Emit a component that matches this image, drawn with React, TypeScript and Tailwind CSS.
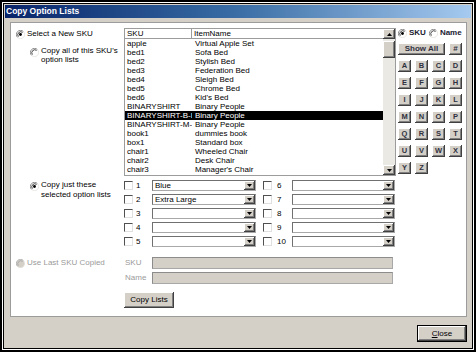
import React from 'react';

const RAISED =
  'bg-[#d4d0c8] shadow-[inset_-1px_-1px_0_#404040,inset_1px_1px_0_#ffffff,inset_-2px_-2px_0_#808080]';

const ITEMS: [string, string][] = [
  ['apple', 'Virtual Apple Set'],
  ['bed1', 'Sofa Bed'],
  ['bed2', 'Stylish Bed'],
  ['bed3', 'Federation Bed'],
  ['bed4', 'Sleigh Bed'],
  ['bed5', 'Chrome Bed'],
  ['bed6', "Kid's Bed"],
  ['BINARYSHIRT', 'Binary People'],
  ['BINARYSHIRT-B-L', 'Binary People'],
  ['BINARYSHIRT-M-L', 'Binary People'],
  ['book1', 'dummies book'],
  ['box1', 'Standard box'],
  ['chair1', 'Wheeled Chair'],
  ['chair2', 'Desk Chair'],
  ['chair3', "Manager's Chair"],
];

const LETTERS = 'ABCDEFGHIJKLMNOPQRSTUVWXYZ'.split('');

function Radio({ checked, disabled }: { checked?: boolean; disabled?: boolean }) {
  return (
    <svg width="9" height="9" viewBox="0 0 12 12" className="shrink-0">
      <circle cx="6" cy="6" r="5.5" fill={disabled ? '#d4d0c8' : '#ffffff'} />
      <path d="M2.1 9.9 A5.5 5.5 0 0 1 9.9 2.1" fill="none" stroke={disabled ? '#b0b0b0' : '#808080'} strokeWidth="1.2" />
      <path d="M3.2 8.8 A4 4 0 0 1 8.8 3.2" fill="none" stroke={disabled ? '#a8a8a8' : '#303030'} strokeWidth="1.2" />
      <path d="M9.9 2.1 A5.5 5.5 0 0 1 2.1 9.9" fill="none" stroke="#e4e2dc" strokeWidth="1" />
      {checked && <circle cx="6" cy="6" r="1.9" fill={disabled ? '#909090' : '#000000'} />}
    </svg>
  );
}

function Checkbox() {
  return (
    <span className="w-[9px] h-[9px] shrink-0 bg-white border border-t-[#505050] border-l-[#505050] border-r-[#e0e0e0] border-b-[#e0e0e0]" />
  );
}

function DownTri() {
  return (
    <svg width="5" height="3" viewBox="0 0 5 3">
      <path d="M0 0H5L2.5 3Z" fill="#000" />
    </svg>
  );
}

function Combo({ value, width }: { value?: string; width: string }) {
  return (
    <div className={`${width} h-[11px] flex bg-white border border-[#a8a8a8] border-t-[#707070] border-l-[#707070]`}>
      <span className="flex-1 pl-[2px] leading-[9px] text-[8px] text-black truncate">{value}</span>
      <span className={`w-[11px] h-full flex items-center justify-center ${RAISED}`}>
        <DownTri />
      </span>
    </div>
  );
}

export default function App() {
  return (
    <div className="w-[476px] h-[352px] border-2 border-black bg-white p-px font-['Liberation_Sans',Arial,sans-serif] text-[8px] text-black">
      <div className="h-full border border-black bg-[#d4d0c8] flex flex-col">
        {/* Title bar */}
        <div className="mx-px mt-px h-[13px] bg-linear-to-r from-[#0a246a] via-[#3a6ea5] to-[#a6caf0] flex items-center pl-[1px]">
          <span className="text-white font-bold text-[8.5px] leading-none">Copy Option Lists</span>
        </div>

        {/* Main panel */}
        <div className="ml-[6px] mr-[5px] mt-[4px] h-[295px] bg-white border border-[#9c9c9c] flex flex-col">
          {/* SKU list section */}
          <div className="flex mt-[5px]">
            <div className="w-[113px]">
              <div className="flex items-center pl-[5px] mt-[1px] h-[10px]">
                <Radio checked />
                <span className="ml-[2px]">Select a New SKU</span>
              </div>
              <div className="flex items-start pl-[19px] mt-[7px]">
                <span className="mt-[2px]">
                  <Radio />
                </span>
                <span className="ml-[2px] leading-[9px]">
                  Copy all of this SKU's
                  <br />
                  option lists
                </span>
              </div>
            </div>

            <div className="w-[272px] h-[148px] border border-[#9c9c9c] flex">
              <div className="flex-1 flex flex-col overflow-hidden">
                <div className="flex h-[10px] border-b border-[#9c9c9c] leading-[9px]">
                  <span className="w-[67px] pl-[2px] border-r border-[#9c9c9c]">SKU</span>
                  <span className="pl-[2px]">ItemName</span>
                </div>
                {ITEMS.map(([sku, name], i) => (
                  <div
                    key={sku}
                    className={`flex h-[9px] leading-[9px] whitespace-nowrap ${i === 8 ? 'bg-black text-white' : ''}`}
                  >
                    <span className="w-[67px] pl-[2px] overflow-hidden">{sku}</span>
                    <span className="pl-[3px]">{name}</span>
                  </div>
                ))}
              </div>
              <div className="w-[12px] flex flex-col bg-[#ebe9e4]">
                <span className={`h-[10px] flex items-center justify-center ${RAISED}`}>
                  <svg width="5" height="3" viewBox="0 0 5 3">
                    <path d="M0 3H5L2.5 0Z" fill="#000" />
                  </svg>
                </span>
                <span className={`h-[17px] mt-[2px] ${RAISED}`} />
                <span className="flex-1" />
                <span className={`h-[10px] flex items-center justify-center ${RAISED}`}>
                  <DownTri />
                </span>
              </div>
            </div>

            <div className="ml-[2px] w-[66px] flex flex-col">
              <div className="flex items-center h-[10px]">
                <Radio checked />
                <span className="ml-[2px] font-bold text-[#202030]">SKU</span>
                <span className="ml-[3px]">
                  <Radio />
                </span>
                <span className="ml-[2px] font-bold text-[#202030]">Name</span>
              </div>
              <div className="flex mt-[5px] gap-[4px]">
                <span className={`w-[47px] h-[12px] flex items-center justify-center font-bold text-[#303040] ${RAISED}`}>
                  Show All
                </span>
                <span className={`w-[13px] h-[12px] flex items-center justify-center font-bold text-[#303040] ${RAISED}`}>
                  #
                </span>
              </div>
              <div className="grid grid-cols-[13px_13px_13px_13px] gap-x-[4px] gap-y-[5px] mt-[5px]">
                {LETTERS.map((l) => (
                  <span
                    key={l}
                    className={`h-[12px] flex items-center justify-center font-bold text-[7.5px] text-[#303040] ${RAISED}`}
                  >
                    {l}
                  </span>
                ))}
              </div>
            </div>
          </div>

          {/* Selected option lists */}
          <div className="flex mt-[4px]">
            <div className="w-[113px] pl-[19px] flex items-start">
              <span className="mt-[2px]">
                <Radio checked />
              </span>
              <span className="ml-[2px] leading-[10px]">
                Copy just these
                <br />
                selected option lists
              </span>
            </div>
            <div className="flex flex-col gap-[3px]">
              {['Blue', 'Extra Large', '', '', ''].map((v, i) => (
                <div key={i} className="flex items-center h-[11px]">
                  <Checkbox />
                  <span className="ml-[3px] w-[16px] leading-none">{i + 1}</span>
                  <Combo value={v} width="w-[104px]" />
                </div>
              ))}
            </div>
            <div className="ml-[7px] flex flex-col gap-[3px]">
              {[6, 7, 8, 9, 10].map((n) => (
                <div key={n} className="flex items-center h-[11px]">
                  <Checkbox />
                  <span className="ml-[5px] w-[15px] leading-none">{n}</span>
                  <Combo width="w-[103px]" />
                </div>
              ))}
            </div>
          </div>

          {/* Last SKU */}
          <div className="flex mt-[10px] text-[#9a9a9a]">
            <div className="w-[113px] pl-[5px] flex items-center h-[12px]">
              <Radio disabled />
              <span className="ml-[2px]">Use Last SKU Copied</span>
            </div>
            <div className="flex flex-col gap-[3px]">
              {['SKU', 'Name'].map((l) => (
                <div key={l} className="flex items-center">
                  <span className="w-[28px] pl-[1px]">{l}</span>
                  <span className="w-[241px] h-[12px] bg-[#d4d0c8] border border-[#a8a8a8] border-t-[#8c8c8c] border-l-[#8c8c8c]" />
                </div>
              ))}
            </div>
          </div>

          <div className={`ml-[113px] mt-[8px] w-[50px] h-[16px] flex items-center justify-center ${RAISED}`}>
            Copy Lists
          </div>
        </div>

        {/* Close */}
        <div className="flex justify-end mr-[5px] mt-[8px]">
          <div className="w-[50px] h-[17px] border border-black flex">
            <div className={`flex-1 flex items-center justify-center ${RAISED}`}>
              <span>
                <span className="underline">C</span>lose
              </span>
            </div>
          </div>
        </div>
      </div>
    </div>
  );
}
